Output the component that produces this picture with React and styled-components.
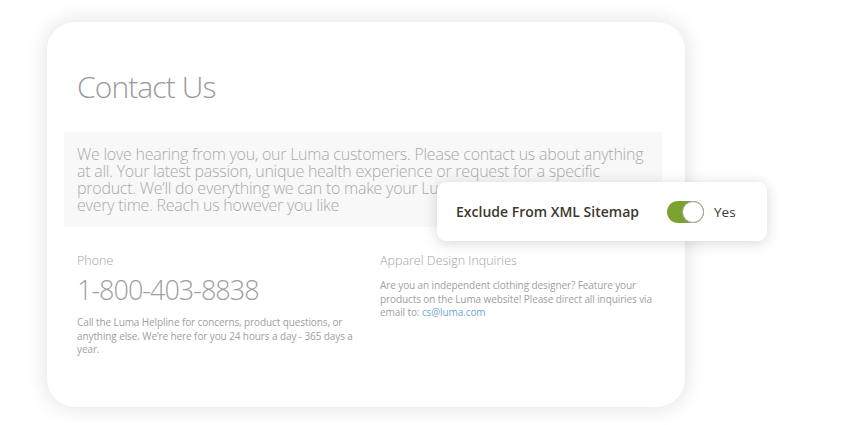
import React from "react";
import styled, { createGlobalStyle } from "styled-components";

const Global = createGlobalStyle`
  html, body { margin: 0; padding: 0; background: #ffffff; }
  body { font-family: "Open Sans", "Liberation Sans", sans-serif; }
  * { box-sizing: border-box; }
`;

const Stage = styled.div`
  position: relative;
  width: 853px;
  height: 425px;
  padding: 22px 0 0 47px;
  overflow: hidden;
`;

const Card = styled.div`
  width: 638px;
  height: 385px;
  background: #fff;
  border-radius: 28px;
  box-shadow: 0 0 22px rgba(0, 0, 0, 0.13);
  padding: 45px 0 0 17px;
`;

const Title = styled.h1`
  margin: 0 0 25px 13px;
  font-size: 30px;
  line-height: 40px;
  font-weight: 300;
  letter-spacing: -0.9px;
  color: #9a9a9a;
`;

const Intro = styled.div`
  width: 598px;
  background: #f8f8f8;
  padding: 14px 6px 13px 13px;
  font-size: 16px;
  line-height: 17px;
  font-weight: 300;
  letter-spacing: -0.25px;
  color: #a9a9a9;
`;

const Columns = styled.div`
  display: grid;
  grid-template-columns: 303px 285px;
  padding: 26px 0 0 13px;
`;

const Column = styled.div`
  display: flex;
  flex-direction: column;
`;

const Label = styled.div`
  font-size: 12.5px;
  line-height: 16px;
  font-weight: 300;
  color: #a3a3a3;
`;

const Phone = styled.div`
  margin-top: 4px;
  font-size: 27px;
  line-height: 34px;
  font-weight: 300;
  letter-spacing: -1px;
  color: #9e9e9e;
`;

const Text = styled.p`
  margin: ${(p) => p.$mt}px 0 0 0;
  width: 285px;
  font-size: 10px;
  line-height: 13.7px;
  font-weight: 400;
  letter-spacing: -0.1px;
  color: #a0a0a0;
`;

const Link = styled.a`
  color: #6fa6d6;
  text-decoration: none;
`;

const Popup = styled.div`
  position: absolute;
  left: 437px;
  top: 182px;
  width: 330px;
  height: 59px;
  background: #fff;
  border-radius: 9px;
  box-shadow: 0 2px 14px rgba(0, 0, 0, 0.16);
  display: flex;
  align-items: center;
  padding-left: 19px;
`;

const PopupLabel = styled.span`
  font-size: 14px;
  font-weight: 600;
  color: #41362f;
  margin-right: 28px;
`;

const Toggle = styled.span`
  position: relative;
  width: 37px;
  height: 22px;
  border-radius: 11px;
  background: #79a22e;
  margin-right: 10px;
  flex: none;
`;

const Knob = styled.span`
  position: absolute;
  right: 0;
  top: 0;
  width: 22px;
  height: 22px;
  border-radius: 50%;
  background: #fff;
  border: 1px solid #a6a6a6;
`;

const YesText = styled.span`
  font-size: 13.5px;
  font-weight: 400;
  color: #41362f;
`;

export default function App() {
  return (
    <>
      <Global />
      <Stage>
        <Card>
          <Title>Contact Us</Title>
          <Intro>
            We love hearing from you, our Luma customers. Please contact us about anything at all. Your latest passion, unique health experience or request for a specific product. We’ll do everything we can to make your Luma experience unforgettable every time. Reach us however you like
          </Intro>
          <Columns>
            <Column>
              <Label>Phone</Label>
              <Phone>1-800-403-8838</Phone>
              <Text $mt={9}>
                Call the Luma Helpline for concerns, product questions, or anything else. We’re here for you 24 hours a day - 365 days a year.
              </Text>
            </Column>
            <Column>
              <Label>Apparel Design Inquiries</Label>
              <Text $mt={10}>
                Are you an independent clothing designer? Feature your products on the Luma website! Please direct all inquiries via email to: <Link href="#">cs@luma.com</Link>
              </Text>
            </Column>
          </Columns>
        </Card>
        <Popup>
          <PopupLabel>Exclude From XML Sitemap</PopupLabel>
          <Toggle>
            <Knob />
          </Toggle>
          <YesText>Yes</YesText>
        </Popup>
      </Stage>
    </>
  );
}
